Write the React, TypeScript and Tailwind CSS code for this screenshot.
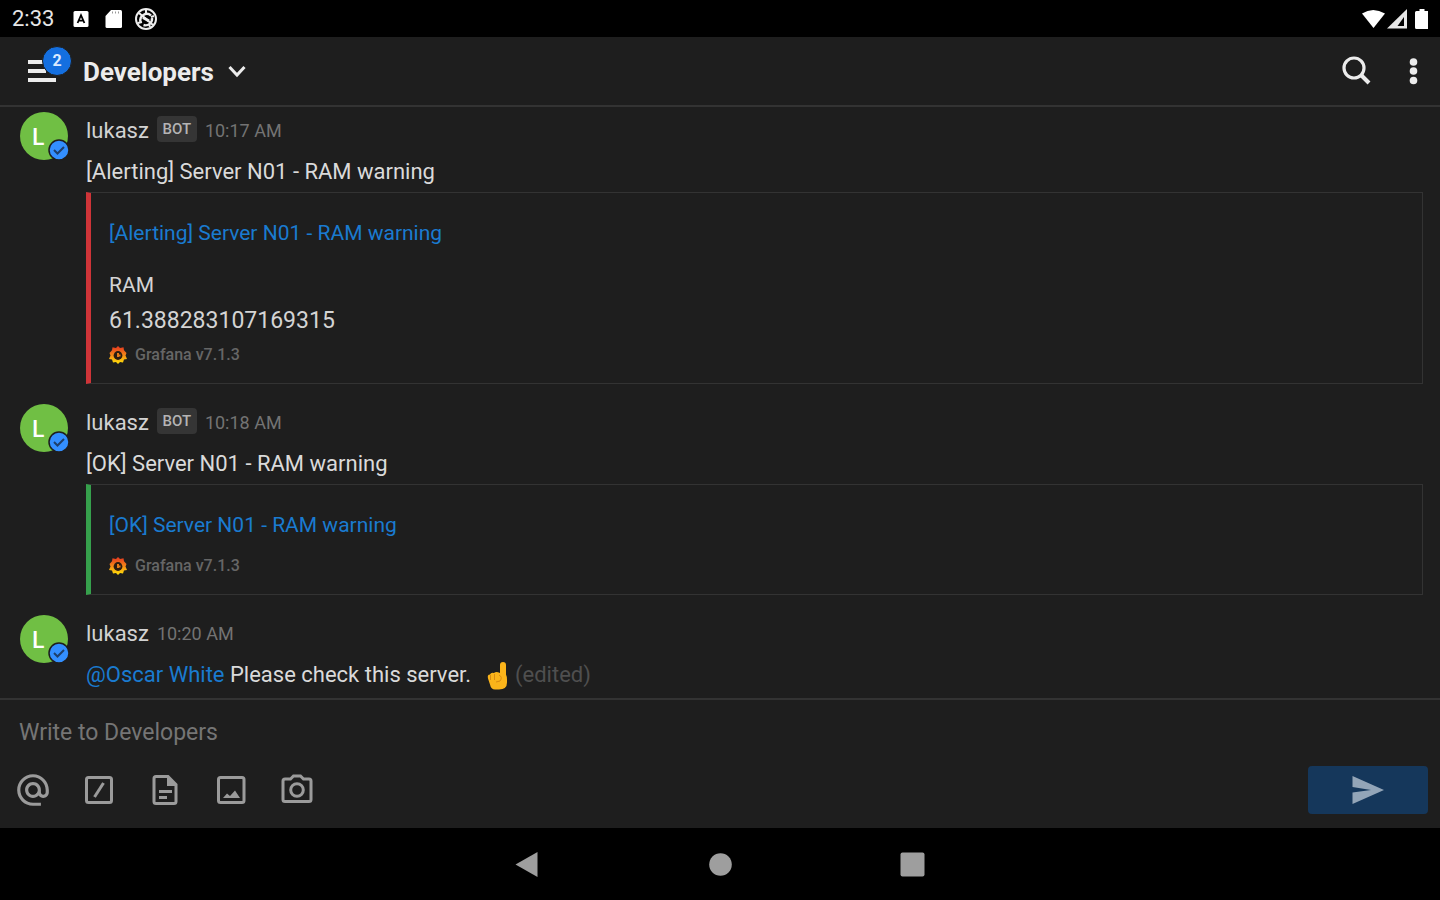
import type { ReactNode } from "react";
import { MdAlternateEmail } from "react-icons/md";

type Attachment = {
  tone: string;
  title: string;
  field?: { name: string; value: string };
};

function StatusBar() {
  return (
    <div className="flex h-[37px] shrink-0 items-center justify-between bg-black px-3 text-white">
      <div className="flex items-center">
        <span className="w-[61px] pt-px text-[22px] leading-6 text-[#e6e6e6]">2:33</span>
        <svg width="16" height="16" viewBox="0 0 16 16" className="mr-4" aria-hidden="true">
          <rect x="0.5" width="15" height="16" rx="1.5" fill="#fff" />
          <path d="M4.6 12 8 4.2 11.4 12M5.8 9.6h4.4" fill="none" stroke="#000" strokeWidth="1.8" />
        </svg>
        <svg width="17" height="20" viewBox="0 0 17 20" className="mr-3" aria-hidden="true">
          <path d="M6 1h9.500q1.500 0 1.500 1.500v15q0 1.500-1.500 1.500H2q-1.500 0-1.500-1.500V7z" fill="#fff" />
          <path d="M7.500 2.500v2M10.500 2.500v2M13.500 2.500v2" stroke="#999" strokeWidth="1" />
        </svg>
        <svg width="24" height="24" viewBox="0 0 24 24" fill="none" stroke="#ededed" aria-hidden="true">
          <circle cx="12" cy="12" r="10" strokeWidth="2" />
          <path d="M6.500 15A6.500 6.500 0 0 1 17 8.500M18 11a6.500 6.500 0 0 1-8.500 7" strokeWidth="2.400" />
          <path d="m5 6 14 12M12 2v4M4 16l4-1M16 20l-1-3M20 9l-3 1" strokeWidth="2" />
          <path d="M9 10.500 15 14" strokeWidth="3" />
        </svg>
      </div>
      <svg width="68" height="22" viewBox="0 0 68 22" fill="#fff" aria-hidden="true">
        <path d="M2 5.500Q13 -1.500 25 5.500L13.500 20z" />
        <path d="M27 20.500 47 1v19.500z" fill="#e6e6e6" />
        <path d="M37.500 18 44 9v9z" fill="#000" />
        <path d="M56.500 3h3V1h5v2h3q1.500 0 1.500 1.500v15q0 1.500-1.500 1.500h-11q-1.500 0-1.500-1.500v-15q0-1.500 1.500-1.500z" />
      </svg>
    </div>
  );
}

function Header() {
  return (
    <header className="flex h-[70px] shrink-0 items-center border-b-2 border-[#333333] pr-3 pl-7">
      <button type="button" aria-label="Open menu, 2 unread" className="relative mr-[27px] h-8 w-7">
        <svg width="28" height="32" viewBox="0 0 28 32" fill="#ececec" aria-hidden="true">
          <path d="M0 5h16v4H0zM0 14h18v4H0zM0 23h28v4H0z" />
        </svg>
        <span className="absolute -top-[9px] left-[14px] flex size-[30px] items-center justify-center rounded-full border border-[#1e1e1e] bg-[#146fe0] text-[16px] font-bold text-[#dbeaff]">
          2
        </span>
      </button>
      <button type="button" className="flex items-center gap-[14px] pt-px text-[26px] leading-8 font-bold text-[#ececec]">
        Developers
        <svg width="18" height="14" viewBox="0 0 18 14" fill="none" stroke="#ececec" strokeWidth="3" aria-hidden="true">
          <path d="m1.500 2 7.500 8 7.500-8" />
        </svg>
      </button>
      <button type="button" aria-label="Search" className="ml-auto">
        <svg width="32" height="32" viewBox="0 0 32 32" fill="none" stroke="#ececec" aria-hidden="true">
          <circle cx="14" cy="13" r="10" strokeWidth="3.200" />
          <path d="m21 20 8 8" strokeWidth="4" />
        </svg>
      </button>
      <button type="button" aria-label="More options" className="ml-7">
        <svg width="28" height="32" viewBox="0 0 28 32" fill="#ececec" aria-hidden="true">
          <circle cx="13.500" cy="7" r="3.800" />
          <circle cx="13.500" cy="16" r="3.800" />
          <circle cx="13.500" cy="25.500" r="3.800" />
        </svg>
      </button>
    </header>
  );
}

function Avatar() {
  return (
    <div className="relative flex size-12 shrink-0 items-center justify-center rounded-full bg-[#70bf44]">
      <span className="pr-3 font-['Open_Sans',sans-serif] text-[24px] leading-8 font-semibold text-white">L</span>
      <svg width="22" height="22" viewBox="0 0 22 22" className="absolute top-[27px] left-7" aria-hidden="true">
        <circle cx="11" cy="11" r="10" fill="#338fff" stroke="#1e1e1e" strokeWidth="1.500" />
        <path d="m6 11 3.500 3.500L16 8" fill="none" stroke="#1e3f6b" strokeWidth="2" />
      </svg>
    </div>
  );
}

function GrafanaLogo() {
  return (
    <svg width="18" height="18" viewBox="0 0 18 18" aria-hidden="true">
      <defs>
        <linearGradient id="grafana" x1="0" y1="0" x2="0" y2="1">
          <stop offset="0.100" stopColor="#e8431f" />
          <stop offset="0.550" stopColor="#f59016" />
          <stop offset="0.900" stopColor="#fcd40a" />
        </linearGradient>
      </defs>
      <path
        d="m9 0 2 2 3.500-.700.500 3L17.500 7l-1 2.500L18 13l-3 .500-1 3-3-.500-2 2-2-2-3 .500-1-3L0 13l1.500-3.500-1-2.500L3 4.300l.500-3L7 2z"
        fill="url(#grafana)"
      />
      <circle cx="9" cy="9.500" r="4.400" fill="#2a1c12" />
      <path d="M9 7v4M9 9.500h2.500" stroke="#e37b18" strokeWidth="2" />
    </svg>
  );
}

function AttachmentCard({ tone, title, field }: Attachment) {
  return (
    <section className={`border border-l-[5px] border-[#333333] pt-6 pb-[18px] pl-[18px] ${tone}`}>
      <a href="#alert" className="block text-[21px] leading-8 text-[#1a7bd0]">
        {title}
      </a>
      {field && (
        <dl className="mt-[18px] -mb-[9px] text-[#d4d4d4]">
          <dt className="text-[21px] leading-9">{field.name}</dt>
          <dd className="text-[23px] leading-9">{field.value}</dd>
        </dl>
      )}
      <div className="mt-[15px] flex h-5 items-center gap-2 text-[16px] font-medium text-[#666666]">
        <GrafanaLogo />
        Grafana v7.1.3
      </div>
    </section>
  );
}

function Message({ time, bot, attachment, children }: { time: string; bot?: boolean; attachment?: Attachment; children: ReactNode }) {
  return (
    <article className="flex gap-[18px]">
      <Avatar />
      <div className="min-w-0 flex-1">
        <div className="flex h-9 items-center pt-[2px]">
          <span className="mr-2 text-[22px] leading-8 text-[#d2d2d2]">lukasz</span>
          {bot && (
            <span className="mr-2 -mt-1 flex h-[26px] w-10 items-center justify-center rounded-sm bg-[#353535] text-[15px] font-medium text-[#b4b4b4]">
              BOT
            </span>
          )}
          <time className="text-[18px] leading-8 text-[#737373]">{time}</time>
        </div>
        <p className="pt-1 text-[22px] leading-10 text-[#dadada]">{children}</p>
        {attachment && <AttachmentCard {...attachment} />}
      </div>
    </article>
  );
}

function PointingUp() {
  return (
    <svg width="20" height="28" viewBox="0 0 20 28" role="img" aria-label="Pointing up" className="mr-2 ml-4 inline-block">
      <path
        d="M13 3q0-3 3-3t3 3v9.500q1 2 1 5v3q0 7-8 7H8q-4 0-5-5l-2-6q-1-4 2-4 1-2.500 4-1.500 2-2 6 0z"
        fill="#fbb41a"
      />
      <path d="M3.500 13v5M7.500 12v6M12 13q4 2 1 6l-4 1" fill="none" stroke="#d98b12" strokeWidth="1" />
    </svg>
  );
}

function ToolButton({ label, children }: { label: string; children: ReactNode }) {
  return (
    <button type="button" aria-label={label} className="flex size-8 items-center justify-center text-[#9b9b9b]">
      {children}
    </button>
  );
}

function Composer() {
  return (
    <form className="shrink-0 border-t-2 border-[#333333] pt-4 pr-3 pb-[14px] pl-[17px]" onSubmit={(e) => e.preventDefault()}>
      <input
        type="text"
        aria-label="Message"
        placeholder="Write to Developers"
        className="block h-[34px] w-full bg-transparent pl-[2px] text-[23px] text-[#dadada] outline-none placeholder:text-[#757575]"
      />
      <div className="mt-4 flex h-12 items-center gap-[34px]">
        <ToolButton label="Mention">
          <MdAlternateEmail size={38} className="shrink-0" />
        </ToolButton>
        <ToolButton label="Slash command">
          <svg width="32" height="32" viewBox="0 0 32 32" fill="none" stroke="currentColor" strokeWidth="3" aria-hidden="true">
            <rect x="3.500" y="3.500" width="25" height="25" rx="2" />
            <path d="M11.500 23 20.500 9" />
          </svg>
        </ToolButton>
        <ToolButton label="Attach file">
          <svg width="32" height="32" viewBox="0 0 32 32" fill="none" stroke="currentColor" strokeWidth="3" aria-hidden="true">
            <path d="M19 2.500H7q-2 0-2 2v23q0 2 2 2h18q2 0 2-2v-17z" />
            <path d="M18 2v10h10z" fill="currentColor" stroke="none" />
            <path d="M10 17.500h13M10 23.500h8" />
          </svg>
        </ToolButton>
        <ToolButton label="Attach image">
          <svg width="32" height="32" viewBox="0 0 32 32" fill="none" stroke="currentColor" strokeWidth="3" aria-hidden="true">
            <rect x="3.500" y="3.500" width="25.500" height="25" rx="2" />
            <path d="m8 24 4-4.500 3 2.500 5-5.500L25 24z" fill="currentColor" stroke="none" />
          </svg>
        </ToolButton>
        <ToolButton label="Take photo">
          <svg width="32" height="32" viewBox="0 0 32 32" fill="none" stroke="currentColor" strokeWidth="3" aria-hidden="true">
            <path d="M4 5h5.500l3-3h7l3 3H28q2 0 2 2v18.500q0 2-2 2H4q-2 0-2-2V7q0-2 2-2z" />
            <circle cx="16" cy="16" r="6.300" />
          </svg>
        </ToolButton>
        <button type="submit" aria-label="Send" className="ml-auto flex h-12 w-[120px] items-center justify-center rounded bg-[#15375b]">
          <svg width="34" height="28" viewBox="0 0 34 28" fill="#93a5b8" aria-hidden="true">
            <path d="M1.500 0 33 14 1.500 28V16.500L20 14 1.500 11z" />
          </svg>
        </button>
      </div>
    </form>
  );
}

function NavigationBar() {
  return (
    <nav aria-label="System" className="flex h-[72px] shrink-0 items-center justify-center gap-40 bg-black text-[#9e9e9e]">
      <button type="button" aria-label="Back">
        <svg width="32" height="32" viewBox="0 0 32 32" fill="currentColor" aria-hidden="true">
          <path d="M3.500 16.500 25.500 4v25z" />
        </svg>
      </button>
      <button type="button" aria-label="Home">
        <svg width="32" height="32" viewBox="0 0 32 32" fill="currentColor" aria-hidden="true">
          <circle cx="16.500" cy="16.500" r="11.300" />
        </svg>
      </button>
      <button type="button" aria-label="Recent apps">
        <svg width="32" height="32" viewBox="0 0 32 32" fill="currentColor" aria-hidden="true">
          <rect x="4.500" y="4.500" width="24" height="24" rx="2" />
        </svg>
      </button>
    </nav>
  );
}

export default function App() {
  return (
    <div className="flex min-h-screen flex-col bg-[#1e1e1e] font-[Roboto,sans-serif]">
      <StatusBar />
      <Header />
      <main className="flex flex-1 flex-col gap-5 pt-[5px] pr-[17px] pl-5">
        <Message
          time="10:17 AM"
          bot
          attachment={{
            tone: "border-l-[#cf3438]",
            title: "[Alerting] Server N01 - RAM warning",
            field: { name: "RAM", value: "61.388283107169315" },
          }}
        >
          [Alerting] Server N01 - RAM warning
        </Message>
        <Message time="10:18 AM" bot attachment={{ tone: "border-l-[#36a04c]", title: "[OK] Server N01 - RAM warning" }}>
          [OK] Server N01 - RAM warning
        </Message>
        <Message time="10:20 AM">
          <a href="#oscar-white" className="text-[#1a7bd0]">
            @Oscar White
          </a>{" "}
          Please check this server.
          <PointingUp />
          <span className="text-[#4f4f4f]">(edited)</span>
        </Message>
      </main>
      <Composer />
      <NavigationBar />
    </div>
  );
}
